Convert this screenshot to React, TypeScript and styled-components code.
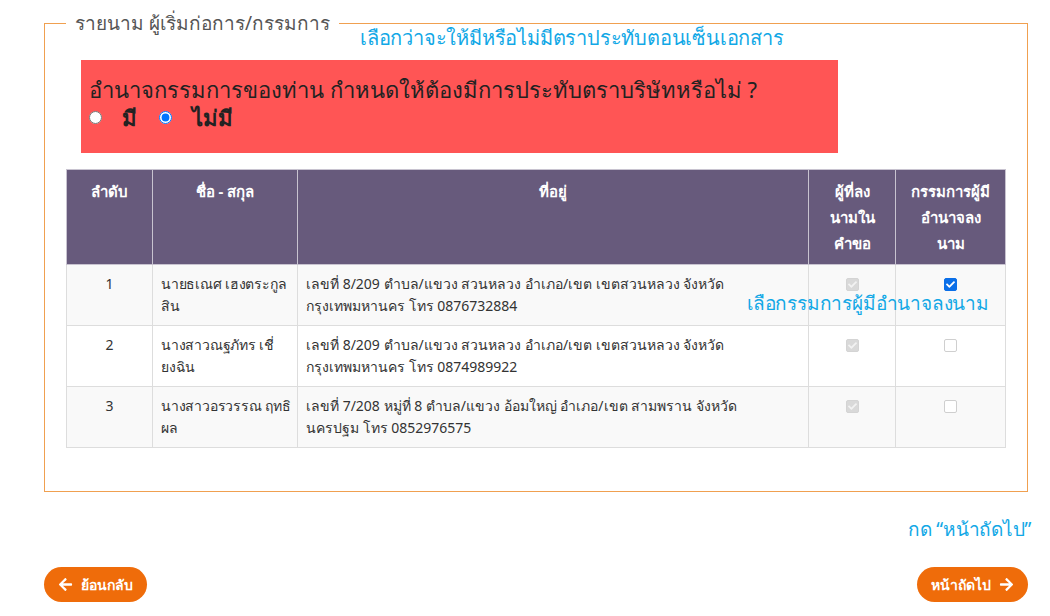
import React from 'react';
import styled, { createGlobalStyle } from 'styled-components';
import { FaArrowLeft, FaArrowRight, FaCheck } from 'react-icons/fa';

const GlobalStyle = createGlobalStyle`
    body {
        margin: 0;
        background: #ffffff;
        font-family: Tahoma, "Noto Sans", "Liberation Sans", sans-serif;
        color: #333333;
    }
`;

const Page = styled.div`
    position: relative;
    width: 1050px;
    height: 616px;
    box-sizing: border-box;
    padding: 10px 22px 0 44px;
    overflow: hidden;
`;

const Fieldset = styled.fieldset`
    margin: 0;
    padding: 0 22px 43px 21px;
    border: 1px solid #f0a050;
    min-width: 0;
`;

const Legend = styled.legend`
    margin-left: 0;
    padding: 0 9px;
    font-size: 19px;
    line-height: 26px;
    color: #555555;
`;

const Note = styled.div<{ $left: number; $top: number; $size: number }>`
    position: absolute;
    left: ${(p) => p.$left}px;
    top: ${(p) => p.$top}px;
    font-size: ${(p) => p.$size}px;
    line-height: 1;
    letter-spacing: -0.2px;
    color: #12a8e6;
    white-space: nowrap;
    z-index: 5;
`;

const Alert = styled.div`
    box-sizing: border-box;
    margin: 24px 0 16px 15px;
    width: 757px;
    height: 93px;
    padding: 15px 8px 0;
    background: #ff5555;
    color: #222222;
`;

const Question = styled.div`
    font-size: 22px;
    line-height: 28px;
`;

const Choices = styled.div`
    display: flex;
    align-items: center;
    font-size: 22px;
    font-weight: bold;
    line-height: 28px;
`;

const Choice = styled.label`
    display: flex;
    align-items: center;
    gap: 20px;
    margin-right: 22px;

    input {
        margin: 0;
        width: 13px;
        height: 13px;
    }
`;

const Table = styled.table`
    width: 939px;
    border-collapse: collapse;
    table-layout: fixed;
    font-size: 14px;
`;

const Th = styled.th<{ $w: number }>`
    box-sizing: border-box;
    width: ${(p) => p.$w}px;
    padding: 8px;
    background: #675a7c;
    color: #ffffff;
    font-weight: bold;
    font-size: 15px;
    line-height: 26px;
    text-align: center;
    vertical-align: top;
    border: 1px solid #c8c3d0;
`;

const Row = styled.tr<{ $striped: boolean }>`
    background: ${(p) => (p.$striped ? '#f9f9f9' : '#ffffff')};
`;

const Td = styled.td<{ $center?: boolean; $nowrap?: boolean }>`
    padding: 8px;
    line-height: 22px;
    vertical-align: top;
    text-align: ${(p) => (p.$center ? 'center' : 'left')};
    white-space: ${(p) => (p.$nowrap ? 'nowrap' : 'normal')};
    letter-spacing: ${(p) => (p.$nowrap ? '-0.2px' : 'normal')};
    border: 1px solid #dddddd;
    color: #333333;
`;

const Box = styled.span<{ $checked: boolean; $disabled?: boolean }>`
    display: inline-flex;
    align-items: center;
    justify-content: center;
    box-sizing: border-box;
    width: 13px;
    height: 13px;
    margin-top: 5px;
    border-radius: 2px;
    border: 1px solid
        ${(p) => (p.$disabled ? '#d4d4d4' : p.$checked ? '#0b6fe8' : '#cfcfcf')};
    background: ${(p) => (p.$disabled ? '#d9d9d9' : p.$checked ? '#0b6fe8' : '#ffffff')};
    color: ${(p) => (p.$disabled ? '#f2f2f2' : '#ffffff')};
    font-size: 9px;
`;

const Footer = styled.div`
    display: flex;
    justify-content: space-between;
    margin-top: 75px;
`;

const Button = styled.button`
    display: flex;
    align-items: center;
    gap: 8px;
    height: 35px;
    padding: 0 14px;
    border: none;
    border-radius: 18px;
    background: #ef6c0a;
    color: #ffffff;
    font-family: inherit;
    font-size: 14px;
    font-weight: bold;
    cursor: pointer;
`;

const Lines: React.FC<{ lines: string[] }> = ({ lines }) => (
    <>
        {lines.map((l, i) => (
            <React.Fragment key={i}>
                {i > 0 && <br />}
                {l}
            </React.Fragment>
        ))}
    </>
);

const people = [
    {
        no: 1,
        name: ['นายธเณศ เฮงตระกูล', 'สิน'],
        address: ['เลขที่ 8/209 ตำบล/แขวง สวนหลวง อำเภอ/เขต เขตสวนหลวง จังหวัด', 'กรุงเทพมหานคร โทร 0876732884'],
        authorized: true,
    },
    {
        no: 2,
        name: ['นางสาวณฐภัทร เชี่', 'ยงฉิน'],
        address: ['เลขที่ 8/209 ตำบล/แขวง สวนหลวง อำเภอ/เขต เขตสวนหลวง จังหวัด', 'กรุงเทพมหานคร โทร 0874989922'],
        authorized: false,
    },
    {
        no: 3,
        name: ['นางสาวอรวรรณ ฤทธิ', 'ผล'],
        address: ['เลขที่ 7/208 หมู่ที่ 8 ตำบล/แขวง อ้อมใหญ่ อำเภอ/เขต สามพราน จังหวัด', 'นครปฐม โทร 0852976575'],
        authorized: false,
    },
];

const App: React.FC = () => {
    return (
        <>
            <GlobalStyle />
            <Page>
                <Fieldset>
                    <Legend>รายนาม ผู้เริ่มก่อการ/กรรมการ</Legend>
                    <Alert>
                        <Question>อำนาจกรรมการของท่าน กำหนดให้ต้องมีการประทับตราบริษัทหรือไม่ ?</Question>
                        <Choices>
                            <Choice>
                                <input type="radio" name="seal" />
                                มี
                            </Choice>
                            <Choice>
                                <input type="radio" name="seal" defaultChecked />
                                ไม่มี
                            </Choice>
                        </Choices>
                    </Alert>
                    <Table>
                        <thead>
                            <tr>
                                <Th $w={86}>ลำดับ</Th>
                                <Th $w={145}>ชื่อ - สกุล</Th>
                                <Th $w={511}>ที่อยู่</Th>
                                <Th $w={87}>
                                    <Lines lines={['ผู้ที่ลง', 'นามใน', 'คำขอ']} />
                                </Th>
                                <Th $w={110}>
                                    <Lines lines={['กรรมการผู้มี', 'อำนาจลง', 'นาม']} />
                                </Th>
                            </tr>
                        </thead>
                        <tbody>
                            {people.map((p, i) => (
                                <Row key={p.no} $striped={i % 2 === 0}>
                                    <Td $center>{p.no}</Td>
                                    <Td $nowrap>
                                        <Lines lines={p.name} />
                                    </Td>
                                    <Td>
                                        <Lines lines={p.address} />
                                    </Td>
                                    <Td $center>
                                        <Box $checked $disabled>
                                            <FaCheck />
                                        </Box>
                                    </Td>
                                    <Td $center>
                                        <Box $checked={p.authorized}>{p.authorized && <FaCheck />}</Box>
                                    </Td>
                                </Row>
                            ))}
                        </tbody>
                    </Table>
                </Fieldset>
                <Footer>
                    <Button>
                        <FaArrowLeft size={15} />
                        ย้อนกลับ
                    </Button>
                    <Button>
                        หน้าถัดไป
                        <FaArrowRight size={15} />
                    </Button>
                </Footer>
                <Note $left={360} $top={28} $size={20}>เลือกว่าจะให้มีหรือไม่มีตราประทับตอนเซ็นเอกสาร</Note>
                <Note $left={747} $top={294} $size={19}>เลือกรรมการผู้มีอำนาจลงนาม</Note>
                <Note $left={908} $top={520} $size={19}>กด “หน้าถัดไป”</Note>
            </Page>
        </>
    );
};

export default App;
